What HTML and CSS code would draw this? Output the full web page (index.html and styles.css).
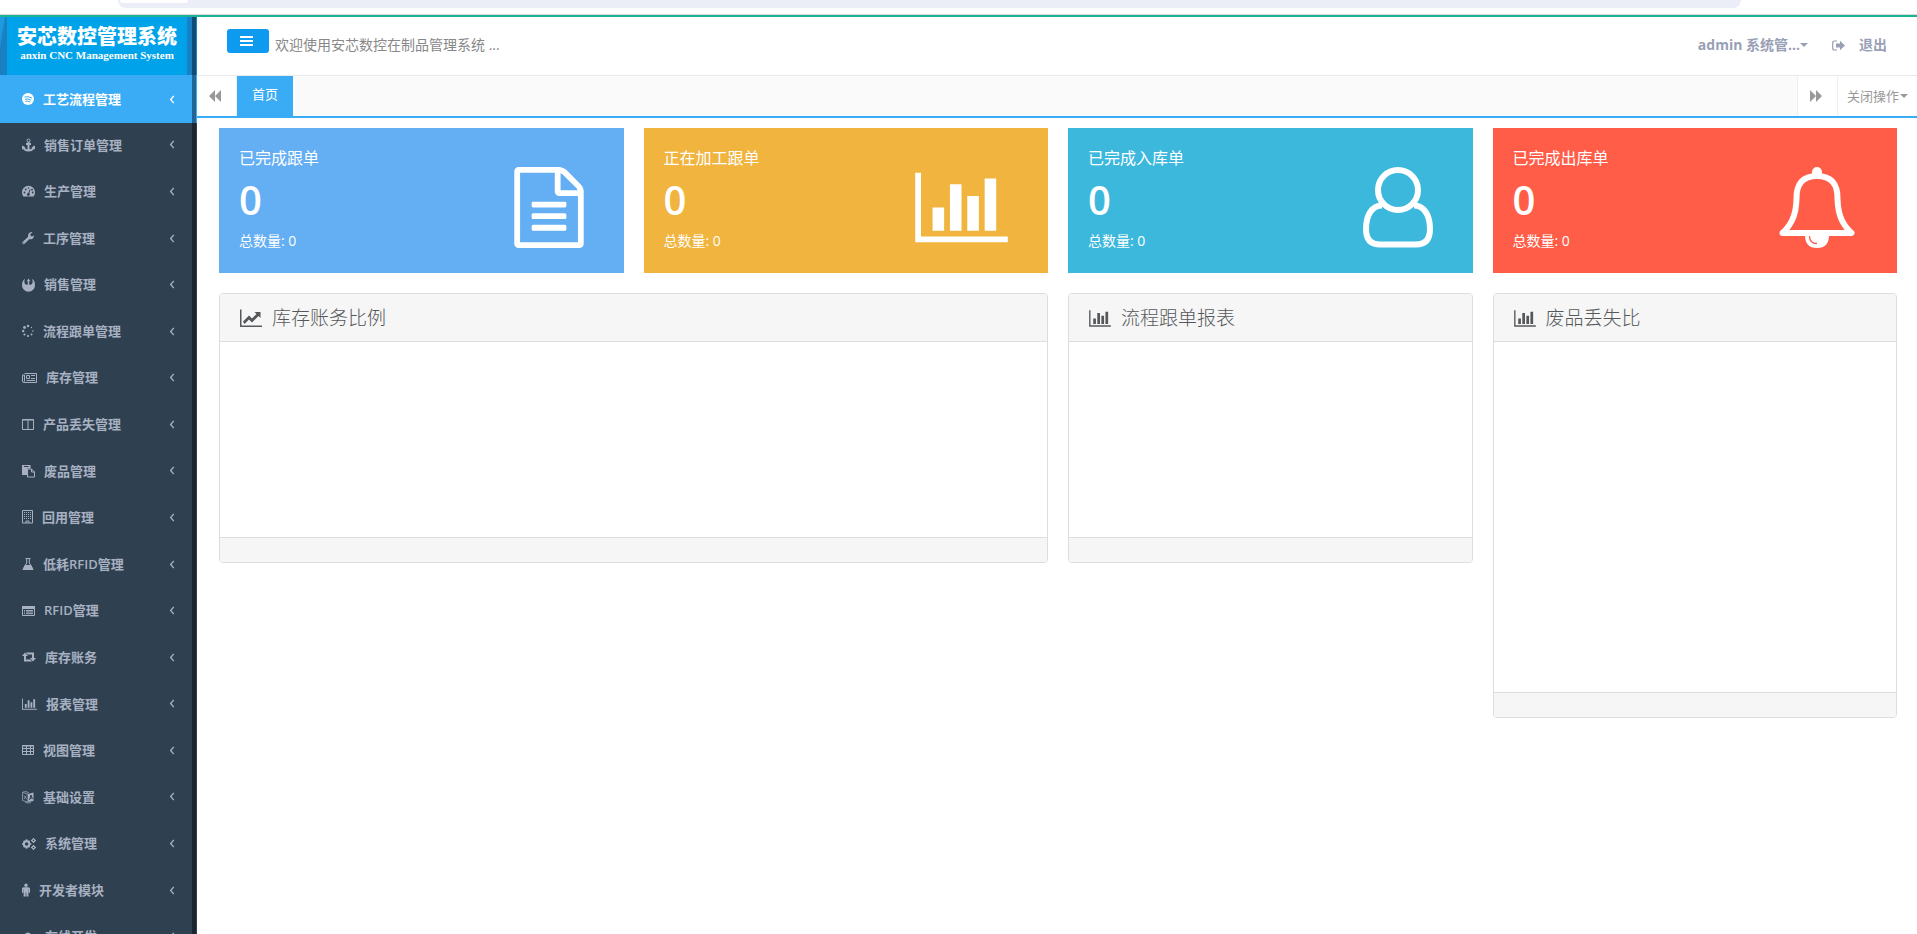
FILE: index.html
```html
<!DOCTYPE html>
<html lang="zh-CN">
<head>
<meta charset="utf-8">
<title>安芯数控管理系统</title>
<link rel="stylesheet" href="styles.css">
</head>
<body>
<svg class="sprite" aria-hidden="true">
  <symbol id="i-chart" viewBox="0 0 2048 1792"><path d="M640 896v512h-256v-512h256zm384-512v1024h-256v-1024h256zm1024 1152v128h-2048v-1536h128v1408h1920zm-640-896v768h-256v-768h256zm384-384v1152h-256v-1152h256z"/></symbol>
  <symbol id="i-left" viewBox="0 0 6 10"><path d="M5 1L1.500 5L5 9" fill="none" stroke="currentColor" stroke-width="1.500"/></symbol>
</svg>
<div class="browser-strip"><div class="address"><span class="address-chip"></span></div></div>
<div class="app">
  <aside class="sidebar">
    <div class="logo"><div class="logo-plate"><strong>安芯数控管理系统</strong><span>anxin CNC Management System</span></div></div>
    <nav class="menu">
      <a class="active" href="#"><svg class="w12" viewBox="0 0 12 14"><circle cx="6" cy="7" r="6"/><path d="M2.500 5q4-1 7.500 1M3 7.300q3-1 6 .8M3.300 9.300q2.500-.6 4.800.6" class="cut"/></svg><span>工艺流程管理</span><svg class="arrow"><use href="#i-left"/></svg></a>
      <a href="#"><svg class="w13" viewBox="0 0 13 14"><path class="bold" d="M6.500 4v8.500M4 6h5M1 8.500q1 4 5.500 4t5.500-4"/><circle class="line" cx="6.500" cy="2.500" r="1.500"/><path d="M0 11.500V7.500l3.500 2zM13 11.500V7.500l-3.500 2z"/></svg><span>销售订单管理</span><svg class="arrow"><use href="#i-left"/></svg></a>
      <a href="#"><svg class="w13" viewBox="0 0 13 14"><path d="M1.500 12.500a6.500 6.500 0 1 1 10 0z"/><path class="cut" d="M6.500 10.500L8 5.500"/><g class="hole"><circle cx="2.500" cy="8.500" r=".9"/><circle cx="3.700" cy="5.500" r=".9"/><circle cx="6.500" cy="4" r=".8"/><circle cx="10" cy="5.700" r=".9"/><circle cx="10.700" cy="8.500" r=".9"/><circle cx="6.300" cy="10.500" r="1.400"/></g></svg><span>生产管理</span><svg class="arrow"><use href="#i-left"/></svg></a>
      <a href="#"><svg class="w12" viewBox="0 0 12 14"><path d="M.5 11L6 6Q5.500 3 7.500 1.700Q9 .8 10.500 1.300L8.500 3v1.700l1.500.8L12 4.200Q12 7 10 8Q8.500 8.700 7.500 8L2.300 13Q1.500 13.500.7 12.700Q0 12 .5 11z"/><circle class="hole" cx="1.800" cy="11.700" r=".5"/></svg><span>工序管理</span><svg class="arrow"><use href="#i-left"/></svg></a>
      <a href="#"><svg class="w13" viewBox="0 0 13 14"><path d="M2.800.8Q1.700 4.500 3 6Q4.200 7.200 5.800 6.500V3L4.500 3.500L6.500.5L8.500 3.500L7.200 3v3.500Q8.800 7.200 10 6Q11.300 4.500 10.200.8Q13 3 13 7.300A6.500 6.400 0 0 1 0 7.300Q0 3 2.800.8z"/></svg><span>销售管理</span><svg class="arrow"><use href="#i-left"/></svg></a>
      <a href="#"><svg class="w12" viewBox="0 0 12 14"><circle cx="6" cy="2" r="1.200"/><circle cx="2.500" cy="3.500" r="1.400"/><circle cx="1.200" cy="7" r="1.200"/><circle cx="2.500" cy="10.500" r="1.100"/><circle cx="6" cy="12" r="1.100"/><circle cx="9.500" cy="10.500" r="1"/><circle cx="10.900" cy="7" r=".8"/><circle cx="9.500" cy="3.500" r=".7"/></svg><span>流程跟单管理</span><svg class="arrow"><use href="#i-left"/></svg></a>
      <a href="#"><svg class="w15" viewBox="0 0 15 14"><path class="line" d="M2.500 2.500h12v9H2q-1.500 0-1.500-1.500V4h2v6.500M4.500 4.500h3v3h-3zM9 4.500h4M9 7.500h4M4.500 9.500H13"/></svg><span>库存管理</span><svg class="arrow"><use href="#i-left"/></svg></a>
      <a href="#"><svg class="w12" viewBox="0 0 12 14"><path class="line" d="M.5 2.500h11v10H.5zM6 2v10M0 3h12"/></svg><span>产品丢失管理</span><svg class="arrow"><use href="#i-left"/></svg></a>
      <a href="#"><svg class="w13" viewBox="0 0 13 14"><path d="M0 1h8.500v3.500H5V11H0z"/><path class="cut" d="M2 2.500h4.500"/><path class="line" d="M5.500 5H9.500L12.500 8v5h-7zM9.500 5v3h3"/></svg><span>废品管理</span><svg class="arrow"><use href="#i-left"/></svg></a>
      <a href="#"><svg class="w11" viewBox="0 0 11 14"><path class="line" d="M.5 .5h10v12.500H.500zM4 13v-2h3v2"/><path class="dots" d="M2 2.500h7M2 4.500h7M2 6.500h7M2 8.500h7"/></svg><span>回用管理</span><svg class="arrow"><use href="#i-left"/></svg></a>
      <a href="#"><svg class="w12" viewBox="0 0 12 14"><path class="line" d="M3.500 1.500h5M4.700 1.500V6L1.500 11.500h9L7.300 6V1.500"/><path d="M3 8h6l2.700 5H.3z"/></svg><span>低耗RFID管理</span><svg class="arrow"><use href="#i-left"/></svg></a>
      <a href="#"><svg class="w13" viewBox="0 0 13 14"><path class="line" d="M.5 2.500h12v9H.5zM2 6.500h1M4 6.500h7M2 8h1M4 8h7M2 9.700h1M4 9.700h7"/><path d="M0 2h13v3H0z"/></svg><span>RFID管理</span><svg class="arrow"><use href="#i-left"/></svg></a>
      <a href="#"><svg class="w14" viewBox="0 0 14 14"><path d="M3 2.500L6 6H4v3.500h4.500L10 11.500H2V6H0zM11 11.500L8 8h2V4.500H5.500L4 2.500h8V8h2z"/></svg><span>库存账务</span><svg class="arrow"><use href="#i-left"/></svg></a>
      <a href="#"><svg class="w15" viewBox="0 0 2048 1792"><use href="#i-chart"/></svg><span>报表管理</span><svg class="arrow"><use href="#i-left"/></svg></a>
      <a href="#"><svg class="w12" viewBox="0 0 12 14"><path class="line" d="M.5 2.500h11v9H.5zM0 3h12M0 5.500h12M0 8.500h12M4.500 3v9M8.500 3v9"/></svg><span>视图管理</span><svg class="arrow"><use href="#i-left"/></svg></a>
      <a href="#"><svg class="w12" viewBox="0 0 12 14"><path class="thin" d="M.5 2.500L6 4v8L.5 10.500zM1 2l3-.5 3 1.500M2 5.500l3 4M4.500 5.500L2 9M3 12q3 2 6 .5"/><path d="M6 4l5.500-1.500V11L6 12z"/><path class="cut" d="M7.500 10L9 5l1.500 4M8 8h2"/></svg><span>基础设置</span><svg class="arrow"><use href="#i-left"/></svg></a>
      <a href="#"><svg class="w14" viewBox="0 0 14 14"><circle cx="4.600" cy="7" r="2.800" fill="none" stroke="currentColor" stroke-width="2"/><path d="M3.800 2.300h1.600v2H3.800zM3.800 9.700h1.600v2H3.800zM0 6.200h2v1.600H0zM7.300 6.200h2v1.600h-2zM1.200 4.200l1-1 1.500 1.500-1 1zM8 4.200l-1-1-1.500 1.500 1 1zM1.200 9.800l1 1 1.500-1.500-1-1zM8 9.800l-1 1-1.500-1.500 1-1z"/><g fill="none" stroke="currentColor" stroke-width="1.200"><circle cx="11.500" cy="3.400" r="1.400"/><circle cx="11.500" cy="10.600" r="1.400"/></g><path d="M11 1h1v1h-1zM11 5h1v1h-1zM9 3h1v1H9zM13 3h1v1h-1zM11 8h1v1h-1zM11 12h1v1h-1zM9 10h1v1H9zM13 10h1v1h-1z"/></svg><span>系统管理</span><svg class="arrow"><use href="#i-left"/></svg></a>
      <a href="#"><svg class="w8" viewBox="0 0 8 14"><circle cx="4" cy="2.200" r="1.700"/><path d="M1.500 4.200h5Q8 4.200 8 5.700v4H6.700V6.500h-.3v7H4.300v-4h-.6v4H1.600v-7h-.3v3.200H0v-4q0-1.500 1.500-1.500z"/></svg><span>开发者模块</span><svg class="arrow"><use href="#i-left"/></svg></a>
      <a href="#"><svg class="w14" viewBox="0 0 14 14"><path d="M3 12a3 3 0 0 1-.8-5.700A3.700 3.700 0 0 1 9 4.200a2.400 2.400 0 0 1 2.500 2.700A2.600 2.600 0 0 1 11.300 12z"/></svg><span>在线开发</span><svg class="arrow"><use href="#i-left"/></svg></a>
    </nav>
    <div class="scroll-track"></div>
  </aside>
  <div class="page">
    <header class="topbar">
      <button class="toggle" type="button" aria-label="菜单"><svg viewBox="0 0 13 10"><path d="M0 0h13v2H0zM0 4h13v2H0zM0 8h13v2H0z"/></svg></button>
      <span class="welcome">欢迎使用安芯数控在制品管理系统 ...</span>
      <a class="user" href="#">admin 系统管...<i class="caret"></i></a>
      <a class="logout" href="#"><svg viewBox="0 0 13 11"><path d="M5 1H2.500Q.7 1 .7 3v5q0 2 1.800 2H5" fill="none" stroke="currentColor" stroke-width="1.200"/><path d="M4 3.500h4V.8l5 4.700-5 4.700V7.500H4z"/></svg>退出</a>
    </header>
    <div class="tabs">
      <button class="step prev" type="button" aria-label="向左"><svg viewBox="0 0 12 12"><path d="M6 0v12L0 6zM12 0v12L6 6z"/></svg></button>
      <a class="tab" href="#">首页</a>
      <span class="tabs-space"></span>
      <button class="step next" type="button" aria-label="向右"><svg viewBox="0 0 12 12"><path d="M0 0v12l6-6zM6 0v12l6-6z"/></svg></button>
      <button class="close-menu" type="button">关闭操作<i class="caret"></i></button>
    </div>
    <main class="board">
      <section class="stat blue"><div><h2>已完成跟单</h2><strong>0</strong><p>总数量: 0</p></div>
        <svg class="big w70" viewBox="128 0 1536 1792"><path d="M1596 380q28 28 48 76t20 88v1152q0 40-28 68t-68 28h-1344q-40 0-68-28t-28-68v-1600q0-40 28-68t68-28h896q40 0 88 20t76 48zm-444-244v376h376q-10-29-22-41l-313-313q-12-12-41-22zm384 1528v-1024h-416q-40 0-68-28t-28-68v-416h-768v1536h1280zm-1024-864q0-14 9-23t23-9h704q14 0 23 9t9 23v64q0 14-9 23t-23 9h-704q-14 0-23-9t-9-23v-64zm736 224q14 0 23 9t9 23v64q0 14-9 23t-23 9h-704q-14 0-23-9t-9-23v-64q0-14 9-23t23-9h704zm0 256q14 0 23 9t9 23v64q0 14-9 23t-23 9h-704q-14 0-23-9t-9-23v-64q0-14 9-23t23-9h704z"/></svg></section>
      <section class="stat amber"><div><h2>正在加工跟单</h2><strong>0</strong><p>总数量: 0</p></div><svg class="big w93"><use href="#i-chart"/></svg></section>
      <section class="stat cyan"><div><h2>已完成入库单</h2><strong>0</strong><p>总数量: 0</p></div>
        <svg class="big w70" viewBox="0 0 70 81"><g fill="none" stroke="currentColor" stroke-width="6"><circle cx="35" cy="23" r="20"/><path d="M19 38.500C9 38.500 3 48 3 62Q3 77.500 17 77.500H53Q67 77.500 67 62C67 48 61 38.500 51 38.500"/></g></svg></section>
      <section class="stat red"><div><h2>已完成出库单</h2><strong>0</strong><p>总数量: 0</p></div>
        <svg class="big w78" viewBox="0 0 78 81"><path d="M3.500 66C12 58 17 49 17.500 32Q17 9 38 9Q59 9 58.500 32C59 49 64 58 72.500 66z" fill="none" stroke="currentColor" stroke-width="6" stroke-linejoin="round"/><circle cx="38" cy="5" r="5"/><path d="M26 68h24q0 13-12 13T26 68z"/><path d="M30.500 69q0 7.500 7.500 7.500" fill="none" stroke="#ff5d48" stroke-width="1.300"/></svg></section>
      <section class="panel wide"><h3><svg viewBox="0 0 22 18"><path d="M0 0h1.500v16H22v1.500H0zM3 12l6-6 3 3 4.500-4.500L14.500 2.500H20.500V8.500L18.500 6.500 12 13 9 10 4.500 14.500z"/></svg>库存账务比例</h3><div class="panel-body"></div><footer></footer></section>
      <section class="panel"><h3><svg><use href="#i-chart"/></svg>流程跟单报表</h3><div class="panel-body"></div><footer></footer></section>
      <section class="panel tall"><h3><svg><use href="#i-chart"/></svg>废品丢失比</h3><div class="panel-body"></div><footer></footer></section>
    </main>
  </div>
</div>
</body>
</html>
```

FILE: styles.css
```css
* { box-sizing: border-box; }
body {
  margin: 0;
  height: 100vh;
  overflow: hidden;
  display: flex;
  flex-direction: column;
  background: #fff;
  color: #676a6c;
  font: 13px/1.43 "Open Sans", "Noto Sans CJK SC", sans-serif;
}
a { color: inherit; text-decoration: none; }
button { font: inherit; color: inherit; border: 0; background: none; padding: 0; cursor: pointer; }
svg { fill: currentColor; flex: none; }
h2, h3, p { margin: 0; }
.sprite { display: none; }

.browser-strip { height: 15px; flex: none; border-bottom: 1px solid #dadada; padding: 0 176px 0 118px; }
.address { height: 8px; background: #ebeef7; border-radius: 0 0 16px 16px; padding-left: 2px; }
.address-chip { display: block; width: 68px; height: 3px; background: #fff; border-radius: 0 0 8px 8px; }

.app { flex: 1; min-height: 0; display: flex; border-top: 2px solid #1ab394; }

.sidebar { width: 197px; flex: none; position: relative; background: #2f4050; color: #a7b1c2; overflow: hidden; }
.logo { height: 59px; padding: 0 10px 0 7px; background: linear-gradient(100deg, #1c9be0 4px, #1a80c4 6px); }
.logo-plate { height: 100%; background: #00a2e9; color: #fff; display: flex; flex-direction: column; align-items: center; padding-top: 7px; white-space: nowrap; }
.logo-plate strong { font: 900 20px/24px "Noto Sans CJK SC", sans-serif; }
.logo-plate span { font: bold 11px/14px "Liberation Serif", serif; }
.menu { margin-top: -1px; }
.menu a { display: flex; align-items: center; padding: 14px 22px; font-weight: 600; white-space: nowrap; }
.menu a:first-child { padding-top: 15px; margin-bottom: -1px; }
.menu a > svg { height: 14px; }
.menu span { flex: 1; margin-left: 9px; }
.menu .active { background: #3aacf5; color: #fff; }
.menu a .arrow { width: 6px; height: 9px; }
.line { fill: none; stroke: currentColor; stroke-width: 1; }
.bold { fill: none; stroke: currentColor; stroke-width: 2; }
.thin { fill: none; stroke: currentColor; stroke-width: 1; opacity: .7; }
.dots { fill: none; stroke: currentColor; stroke-width: 1; stroke-dasharray: 1 1; }
.cut { fill: none; stroke: #2f4050; stroke-width: 1; }
.active .cut { stroke: #3aacf5; }
.hole { fill: #2f4050; }
.w8 { width: 8px; } .w11 { width: 11px; } .w12 { width: 12px; } .w13 { width: 13px; }
.w14 { width: 14px; } .w15 { width: 15px; }
.scroll-track { position: absolute; top: 0; right: 1px; bottom: 0; width: 4px; background: rgba(0, 0, 0, .4); }

.page { flex: 1; min-width: 0; }
.topbar { height: 59px; border-bottom: 1px solid #e7eaec; display: flex; align-items: center; padding: 0 30px 2px 30px; }
.toggle { width: 42px; height: 24px; margin-bottom: 8px; padding-right: 4px; border-radius: 3px; background: #0e9aef; color: #fff; display: grid; place-items: center; }
.toggle svg { width: 13px; height: 10px; }
.welcome { flex: 1; margin-left: 6px; font-size: 14px; line-height: 20px; color: #888; }
.user, .logout { display: flex; align-items: center; font-size: 14px; line-height: 20px; font-weight: 600; color: #999fb5; }
.user { margin-right: 24px; font-weight: 700; }
.logout svg { width: 13px; height: 11px; margin-right: 14px; }
.caret { border: 4px solid transparent; border-top-color: currentColor; border-bottom: 0; }

.tabs { height: 42px; display: flex; border-bottom: 2px solid #3aacf5; background: #fafafa; color: #999; }
.step { width: 40px; padding-right: 4px; background: #fff; display: grid; place-items: center; }
.step svg { width: 12px; height: 12px; }
.prev { border-right: 1px solid #eee; }
.next, .close-menu { border-left: 1px solid #eee; }
.tab { width: 56px; background: #3aacf5; color: #fff; text-align: center; line-height: 36px; }
.tabs-space { flex: 1; }
.close-menu { width: 80px; background: #fff; display: flex; align-items: center; justify-content: center; gap: 1px; }

.board { display: grid; grid-template-columns: repeat(4, 1fr); gap: 20px; align-items: start; padding: 10px 20px 20px 22px; }
.stat { height: 145px; padding: 18px 40px 22px 20px; display: flex; align-items: center; justify-content: space-between; color: #fff; }
.blue { background: #64aef3; }
.amber { background: #f1b43e; }
.cyan { background: #3db8dd; }
.red { background: #ff5d48; }
.stat h2 { font-size: 16px; line-height: 22px; font-weight: 400; }
.stat strong { display: block; font-size: 40px; line-height: 62px; font-weight: 600; }
.stat p { font-size: 14px; line-height: 20px; }
.big { height: 81px; margin-top: 18px; }
.w70 { width: 70px; } .w78 { width: 78px; } .w93 { width: 93px; }

.panel { border: 1px solid #ddd; border-radius: 4px; overflow: hidden; background: #fff; }
.wide { grid-column: span 2; }
.panel h3 { display: flex; align-items: center; gap: 10px; height: 48px; padding: 1px 20px 0; background: #f6f6f6; border-bottom: 1px solid #ddd; color: #55585a; font-size: 19px; line-height: 28px; font-weight: 300; }
.panel h3 svg { width: 22px; height: 19px; }
.panel-body { height: 195px; }
.tall .panel-body { height: 350px; }
.panel footer { height: 25px; background: #f6f6f6; border-top: 1px solid #ddd; }
```
